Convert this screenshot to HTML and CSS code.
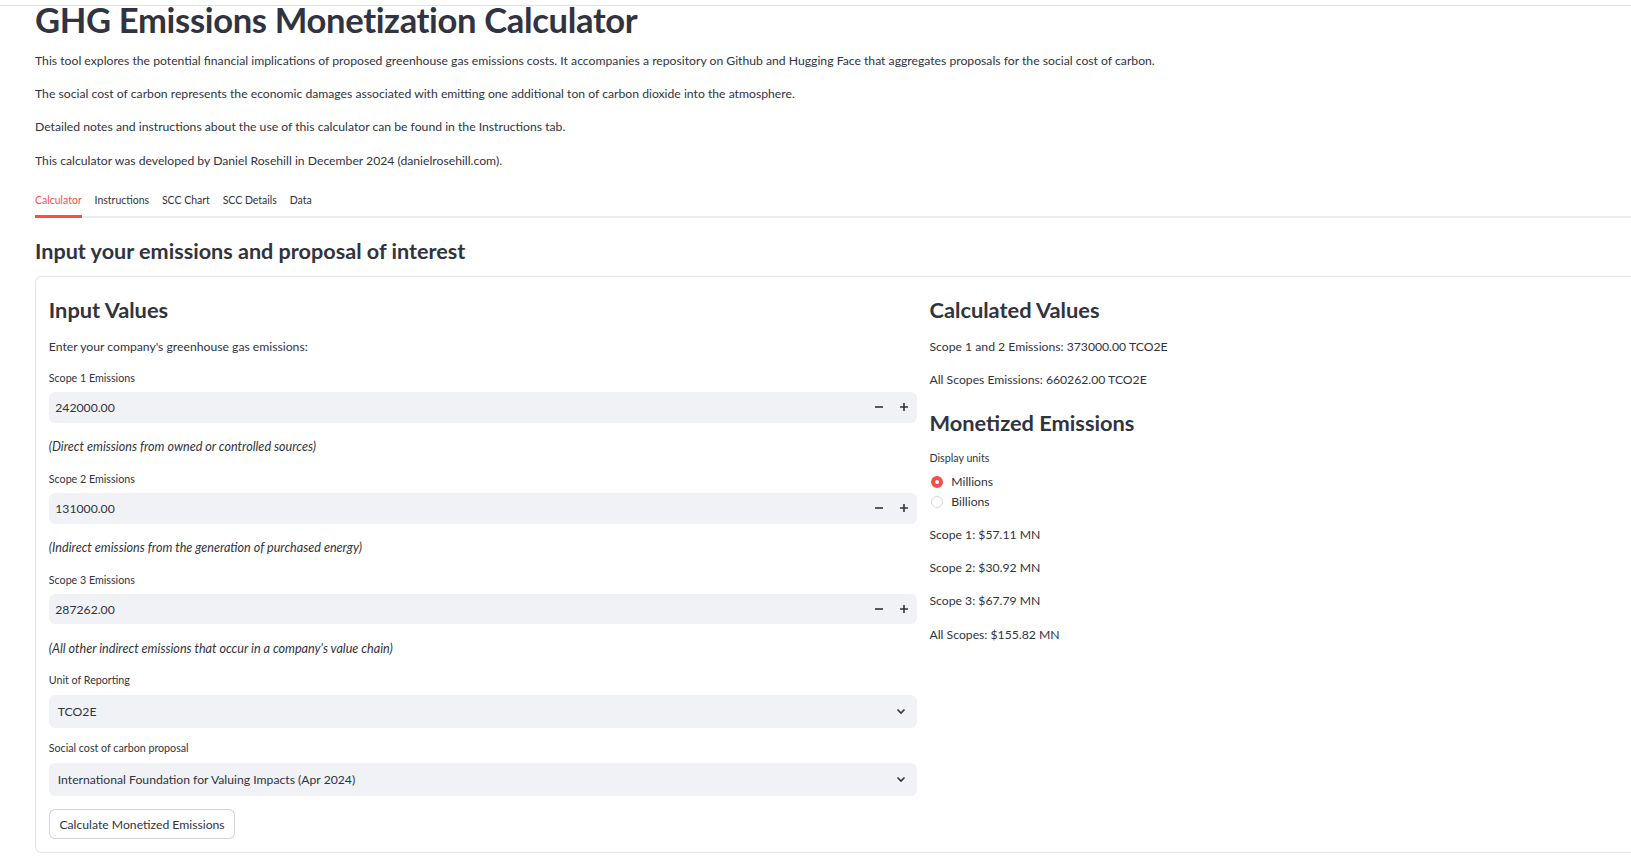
FILE: index.html
```html
<!DOCTYPE html>
<html lang="en">
<head>
<meta charset="utf-8">
<title>GHG Emissions Monetization Calculator</title>
<link rel="stylesheet" href="styles.css">
</head>
<body>
<div class="page">
  <div class="edge-line"></div>
  <main class="main">
    <h1 class="title">GHG Emissions Monetization Calculator</h1>
    <p class="text">This tool explores the potential financial implications of proposed greenhouse gas emissions costs. It accompanies a repository on Github and Hugging Face that aggregates proposals for the social cost of carbon.</p>
    <p class="text">The social cost of carbon represents the economic damages associated with emitting one additional ton of carbon dioxide into the atmosphere.</p>
    <p class="text">Detailed notes and instructions about the use of this calculator can be found in the Instructions tab.</p>
    <p class="text">This calculator was developed by Daniel Rosehill in December 2024 (danielrosehill.com).</p>

    <div class="tabs">
      <div class="tab tab-active">Calculator</div>
      <div class="tab">Instructions</div>
      <div class="tab">SCC Chart</div>
      <div class="tab">SCC Details</div>
      <div class="tab">Data</div>
    </div>

    <h3 class="section-title">Input your emissions and proposal of interest</h3>

    <div class="card">
      <div class="col">
        <h3 class="col-title">Input Values</h3>
        <p class="text">Enter your company's greenhouse gas emissions:</p>

        <div class="field field-number">
          <div class="label">Scope 1 Emissions</div>
          <div class="number-input">
            <span class="value">242000.00</span>
            <span class="step"><svg width="10" height="10" viewBox="0 0 10 10"><path d="M1 5h8" stroke="#31333F" stroke-width="1.6"/></svg></span>
            <span class="step"><svg width="10" height="10" viewBox="0 0 10 10"><path d="M1 5h8M5 1v8" stroke="#31333F" stroke-width="1.6"/></svg></span>
          </div>
        </div>
        <p class="text note"><em>(Direct emissions from owned or controlled sources)</em></p>

        <div class="field field-number">
          <div class="label">Scope 2 Emissions</div>
          <div class="number-input">
            <span class="value">131000.00</span>
            <span class="step"><svg width="10" height="10" viewBox="0 0 10 10"><path d="M1 5h8" stroke="#31333F" stroke-width="1.6"/></svg></span>
            <span class="step"><svg width="10" height="10" viewBox="0 0 10 10"><path d="M1 5h8M5 1v8" stroke="#31333F" stroke-width="1.6"/></svg></span>
          </div>
        </div>
        <p class="text note"><em>(Indirect emissions from the generation of purchased energy)</em></p>

        <div class="field field-number">
          <div class="label">Scope 3 Emissions</div>
          <div class="number-input">
            <span class="value">287262.00</span>
            <span class="step"><svg width="10" height="10" viewBox="0 0 10 10"><path d="M1 5h8" stroke="#31333F" stroke-width="1.6"/></svg></span>
            <span class="step"><svg width="10" height="10" viewBox="0 0 10 10"><path d="M1 5h8M5 1v8" stroke="#31333F" stroke-width="1.6"/></svg></span>
          </div>
        </div>
        <p class="text note"><em>(All other indirect emissions that occur in a company's value chain)</em></p>

        <div class="field">
          <div class="label">Unit of Reporting</div>
          <div class="select">
            <span class="value">TCO2E</span>
            <svg class="chevron" width="10" height="7" viewBox="0 0 10 7"><path d="M1.5 1.5L5 5L8.5 1.5" fill="none" stroke="#31333F" stroke-width="1.6"/></svg>
          </div>
        </div>

        <div class="field">
          <div class="label">Social cost of carbon proposal</div>
          <div class="select">
            <span class="value">International Foundation for Valuing Impacts (Apr 2024)</span>
            <svg class="chevron" width="10" height="7" viewBox="0 0 10 7"><path d="M1.5 1.5L5 5L8.5 1.5" fill="none" stroke="#31333F" stroke-width="1.6"/></svg>
          </div>
        </div>

        <div><button class="btn">Calculate Monetized Emissions</button></div>
      </div>

      <div class="col">
        <h3 class="col-title">Calculated Values</h3>
        <p class="text">Scope 1 and 2 Emissions: 373000.00 TCO2E</p>
        <p class="text">All Scopes Emissions: 660262.00 TCO2E</p>

        <h3 class="col-title">Monetized Emissions</h3>
        <div class="field">
          <div class="label">Display units</div>
          <div class="radios">
            <div class="radio"><span class="dot dot-on"></span><span>Millions</span></div>
            <div class="radio"><span class="dot"></span><span>Billions</span></div>
          </div>
        </div>
        <p class="text">Scope 1: $57.11 MN</p>
        <p class="text">Scope 2: $30.92 MN</p>
        <p class="text">Scope 3: $67.79 MN</p>
        <p class="text">All Scopes: $155.82 MN</p>
      </div>
    </div>
  </main>
</div>
</body>
</html>
```

FILE: styles.css
```css
html, body {
  margin: 0;
  padding: 0;
  background: #ffffff;
  overflow: hidden;
}

body {
  font-family: "Lato", "Noto Sans", sans-serif;
  color: #31333F;
  width: 1631px;
  height: 862px;
}

.page {
  position: relative;
  width: 1631px;
  height: 862px;
  overflow: hidden;
}

.edge-line {
  position: absolute;
  left: 0;
  right: 0;
  top: 5px;
  height: 1px;
  background: #e2e2e2;
}

.main {
  margin-left: 35px;
  width: 1776px;
  display: flex;
  flex-direction: column;
  gap: 12.8px;
}

.title {
  margin: 1.5px 0 1.2px 0;
  font-size: 34.6px;
  line-height: 35.2px;
  font-weight: 700;
  letter-spacing: -0.35px;
  color: #31333F;
}

.text {
  margin: 0;
  font-size: 12.2px;
  line-height: 20.48px;
}

.note {
  font-size: 12.6px;
}

.tabs {
  display: flex;
  gap: 12.8px;
  height: 32px;
  border-bottom: 2px solid #ebecef;
}

.tab {
  position: relative;
  font-size: 10.5px;
  line-height: 32px;
  color: #31333F;
}

.tab-active {
  color: #ff4b4b;
}

.tab-active::after {
  content: "";
  position: absolute;
  left: 0;
  right: 0;
  bottom: -2px;
  height: 3px;
  background: #ff4b4b;
}

.section-title {
  margin: 8px 0 1px 0;
  font-size: 21.6px;
  line-height: 24px;
  font-weight: 700;
}

.card {
  border: 1px solid rgba(49, 51, 63, 0.14);
  border-radius: 6.4px;
  padding: 12.8px;
  display: grid;
  grid-template-columns: 1fr 1fr;
  gap: 13px;
}

.col {
  display: flex;
  flex-direction: column;
  gap: 12.8px;
  min-width: 0;
}

.col-title {
  margin: 0;
  padding-top: 6.7px;
  font-size: 21.8px;
  line-height: 26.9px;
  font-weight: 700;
}

.field {
  display: flex;
  flex-direction: column;
}

.field-number {
  margin-bottom: 2px;
}

.label {
  font-size: 10.7px;
  line-height: 16px;
  margin-bottom: 6.4px;
}

.number-input {
  display: flex;
  align-items: center;
  height: 30.4px;
  background: #f0f2f6;
  border-radius: 6.4px;
  font-size: 12.2px;
}

.number-input .value {
  flex: 1;
  padding-left: 6.5px;
}

.step {
  width: 25px;
  height: 100%;
  display: flex;
  align-items: center;
  justify-content: center;
}

.select {
  display: flex;
  align-items: center;
  justify-content: space-between;
  height: 32.8px;
  background: #f0f2f6;
  border-radius: 6.4px;
  font-size: 12.2px;
  padding: 0 11px 0 9px;
}

.btn {
  font-family: inherit;
  font-size: 12.2px;
  color: #31333F;
  background: #ffffff;
  border: 1px solid rgba(49, 51, 63, 0.2);
  border-radius: 6.4px;
  height: 30px;
  padding: 0 9.6px;
  margin-top: 1px;
}

.radios {
  display: flex;
  flex-direction: column;
}

.radio {
  display: flex;
  align-items: center;
  height: 20px;
  font-size: 12.2px;
  gap: 8px;
}

.dot {
  width: 12.8px;
  height: 12.8px;
  border-radius: 50%;
  box-sizing: border-box;
  border: 1px solid #d5d7dd;
  background: #ffffff;
  margin-left: 1px;
}

.dot-on {
  border: 4.2px solid #ff4b4b;
  background: #ffffff;
}
```
